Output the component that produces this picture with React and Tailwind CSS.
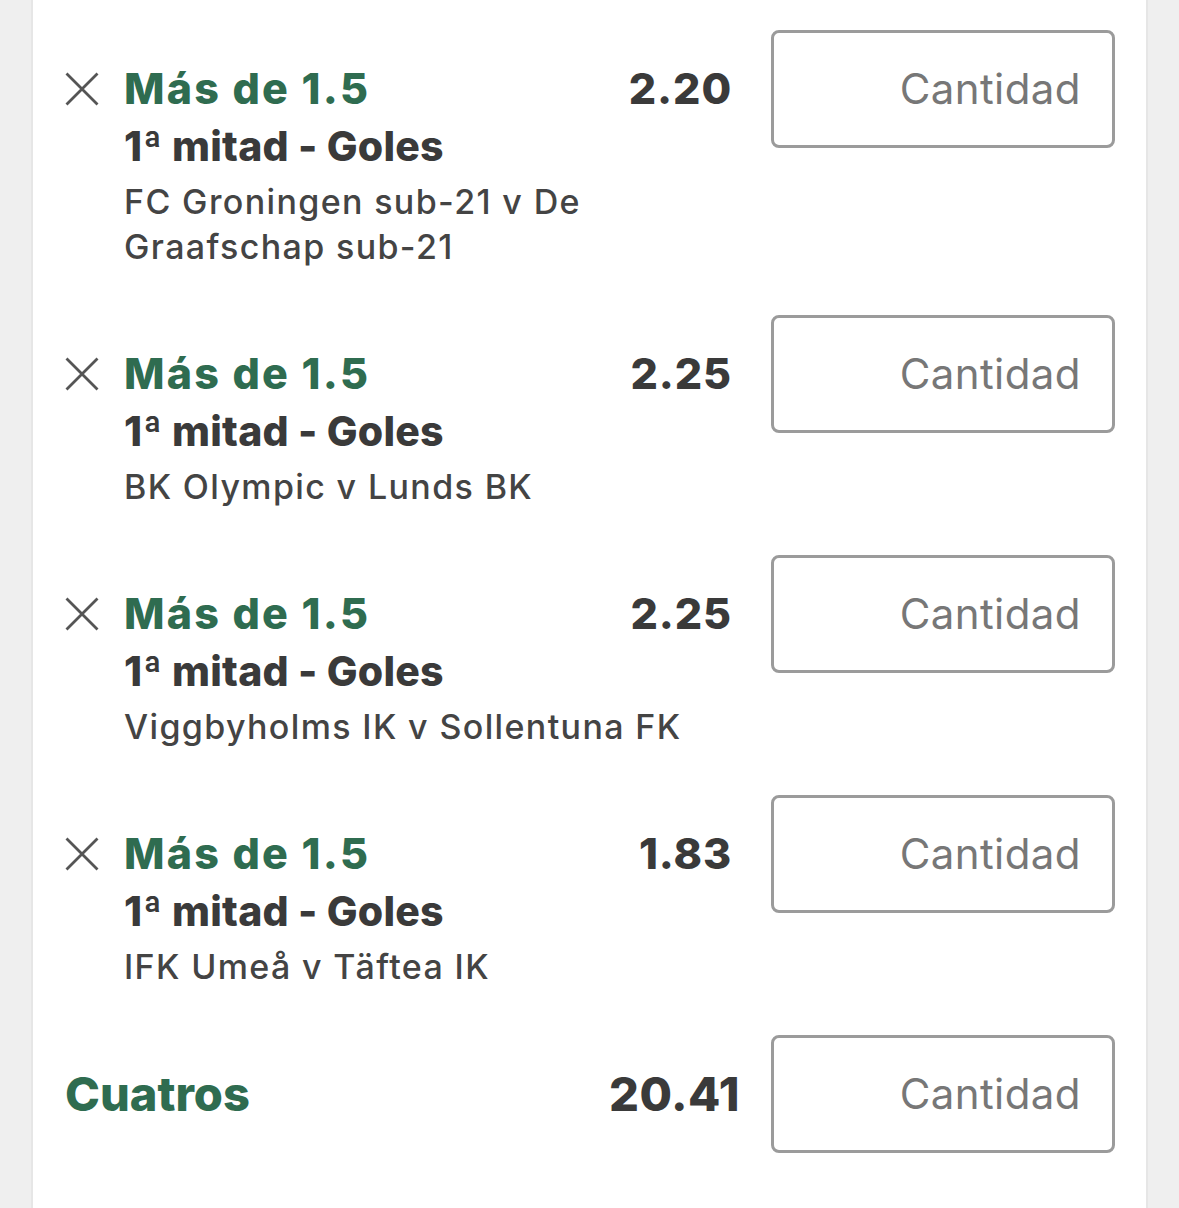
const selections = [
  { odds: "2.20", match: ["FC Groningen sub-21 v De", "Graafschap sub-21"] },
  { odds: "2.25", match: ["BK Olympic v Lunds BK"] },
  { odds: "2.25", match: ["Viggbyholms IK v Sollentuna FK"] },
  { odds: "1.83", match: ["IFK Umeå v Täftea IK"] },
];

function CloseIcon() {
  return (
    <svg width="34" height="34" viewBox="0 0 34 34" className="text-[#555555]">
      <path d="M1.5 1.5 L32.5 32.5 M32.5 1.5 L1.5 32.5" stroke="currentColor" strokeWidth="2.8" fill="none" />
    </svg>
  );
}

function StakeBox() {
  return (
    <div className="flex h-[118px] w-[344px] shrink-0 items-center justify-end rounded-[8px] border-[3px] border-[#9b9b9b] pr-[31px]">
      <span className="text-[42px] leading-none tracking-[0.01em] text-[#777777]">Cantidad</span>
    </div>
  );
}

function SelectionRow({ selection }) {
  return (
    <div className="flex items-start pb-[46px]">
      <div className="flex h-[118px] w-[59px] shrink-0 items-center">
        <CloseIcon />
      </div>
      <div className="min-w-0 flex-1 pt-[32px] pr-[39px]">
        <div className="flex items-start justify-between">
          <div className="text-[43px] font-extrabold leading-[52px] tracking-[0.05em] text-[#2f6c50]">
            Más de 1.5
          </div>
          <div className="text-[43px] font-extrabold leading-[52px] tracking-[0.02em] text-[#3a3a3a]">
            {selection.odds}
          </div>
        </div>
        <div className="mt-[7px] text-[41px] font-extrabold leading-[50px] tracking-[0.005em] text-[#3a3a3a]">
          1ª mitad - Goles
        </div>
        <div className="mt-[8px] text-[34px] font-medium leading-[45px] tracking-[0.04em] text-[#444444]">
          {selection.match.map((line) => (
            <div key={line} className="whitespace-nowrap">{line}</div>
          ))}
        </div>
      </div>
      <StakeBox />
    </div>
  );
}

export default function App() {
  return (
    <div className="min-h-screen bg-[#efefef] font-[Inter,sans-serif]">
      <div className="mx-[31px] min-h-screen border-x-2 border-[#e6e6e6] bg-white pt-[30px] pl-[32px] pr-[31px]">
        {selections.map((selection, i) => (
          <SelectionRow key={i} selection={selection} />
        ))}
        <div className="flex items-center">
          <div className="flex-1 text-[47px] font-extrabold leading-[56px] text-[#2f6c50]">Cuatros</div>
          <div className="pr-[31px] text-[47px] font-extrabold leading-[56px] tracking-[0.01em] text-[#3a3a3a]">20.41</div>
          <StakeBox />
        </div>
      </div>
    </div>
  );
}
